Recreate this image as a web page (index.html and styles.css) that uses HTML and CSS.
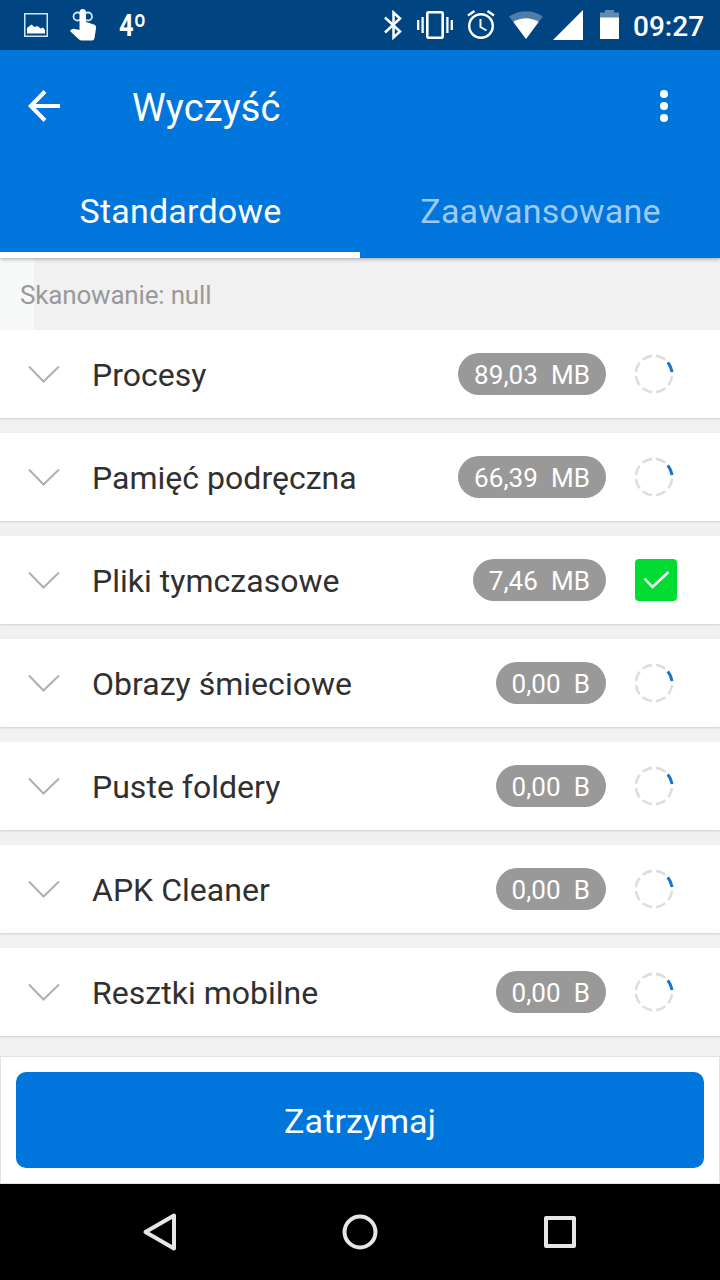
FILE: index.html
```
<!DOCTYPE html>
<html lang="pl">
<head>
<meta charset="utf-8">
<title>Wyczyść</title>
<link rel="stylesheet" href="styles.css">
</head>
<body>
<svg class="defs" width="0" height="0" aria-hidden="true">
  <symbol id="chevron" viewBox="0 0 32 18"><path d="M1 1.500L15.500 16.500L31 1.500" fill="none" stroke="#b0b0b0" stroke-width="2"/></symbol>
  <symbol id="spinner" viewBox="0 0 42 42">
    <circle cx="19" cy="21" r="18.200" fill="none" stroke="#dedede" stroke-width="2.600" pathLength="360" stroke-dasharray="32 13" stroke-dashoffset="-6.500"/>
    <path d="M32.800 9.400Q36 13.500 37.100 19" fill="none" stroke="#1476d0" stroke-width="3"/>
  </symbol>
</svg>
<div class="screen">
  <div class="status">
    <svg class="picture" width="24" height="24" viewBox="0 0 24 24"><rect x=".75" y=".75" width="22.500" height="22.500" fill="none" stroke="#c9e8f6" stroke-width="1.500"/><path d="M3 20.500V15L7.500 11.500L10.500 14L13.500 13L16.500 15.500L19 14.500L21 17V20.500Z" fill="#fff"/></svg>
    <svg class="hand" width="28" height="34" viewBox="0 0 28 34"><g fill="none" stroke="#c9e8f6" stroke-width="1.800"><circle cx="7.500" cy="8.500" r="4"/><circle cx="18" cy="8.500" r="4"/></g><path d="M12.700 1Q16 1 16 4.500V14L24 16.500Q26.500 17.500 26 20.500L24.500 30Q24 32.500 22 32.500H12Q10 32.500 8.500 31L0 23Q2 20 5 21L9.500 22V4.500Q9.500 1 12.700 1Z" fill="#fff"/></svg>
    <span class="temp">4<span class="degree">º</span></span>
    <svg class="bluetooth" width="18" height="30" viewBox="0 0 18 30"><path d="M1 7.500L16 21.500L9.500 27.500V2.500L16 8.500L1 22.500" fill="none" stroke="#fff" stroke-width="2.500"/></svg>
    <svg class="vibrate" width="36" height="28" viewBox="0 0 36 28"><rect x="10.300" y="1.300" width="15.400" height="25.400" rx="1.500" fill="none" stroke="#fff" stroke-width="2.600"/><path d="M1.200 9V19M5.600 6V22M30.400 6V22M34.800 9V19" stroke="#fff" stroke-width="2.300"/></svg>
    <svg class="alarm" width="28" height="29" viewBox="0 0 28 29"><g fill="none" stroke="#fff" stroke-width="2.400"><circle cx="14" cy="16" r="11.800"/><path d="M1 5.500L7.500 1M27 5.500L20.500 1"/><path d="M13.500 9V17L19.500 20.500" stroke-width="2"/></g></svg>
    <svg class="wifi" width="34" height="28" viewBox="0 0 34 28"><path d="M0 5.500Q17-5 34 5.500L29.700 11H4.300Z" fill="#4e7da8"/><path d="M4.300 11Q17 3.500 29.700 11L17 28Z" fill="#fff"/></svg>
    <svg class="signal" width="30" height="30" viewBox="0 0 30 30"><path d="M0 30L30 0V30Z" fill="#fff"/></svg>
    <svg class="battery" width="19" height="29" viewBox="0 0 19 29"><path d="M0 8V2.500H5V0H14V2.500H19V8Z" fill="#5f8bb0"/><path d="M0 7.500H19V29H0Z" fill="#fff"/></svg>
    <span class="clock">09:27</span>
  </div>
  <header class="appbar">
    <div class="titlebar">
      <svg width="32" height="32" viewBox="0 0 32 32"><path d="M17 1.500L2.800 16L17 30.500M2.800 16H32" fill="none" stroke="#fff" stroke-width="4"/></svg>
      <h1 class="title">Wyczyść</h1>
      <svg width="8" height="32" viewBox="0 0 8 32" fill="#fff"><circle cx="4" cy="4" r="4"/><circle cx="4" cy="16" r="4"/><circle cx="4" cy="28" r="4"/></svg>
    </div>
    <nav class="tabs">
      <div class="tab active"><span>Standardowe</span></div>
      <div class="tab"><span>Zaawansowane</span></div>
    </nav>
  </header>
  <div class="scan"><span>Skanowanie: null</span></div>
  <main class="list">
    <div class="row"><svg class="chevron"><use href="#chevron"/></svg><span class="name">Procesy</span><span class="size">89,03&nbsp; MB</span><svg class="state"><use href="#spinner"/></svg></div>
    <div class="row"><svg class="chevron"><use href="#chevron"/></svg><span class="name">Pamięć podręczna</span><span class="size">66,39&nbsp; MB</span><svg class="state"><use href="#spinner"/></svg></div>
    <div class="row"><svg class="chevron"><use href="#chevron"/></svg><span class="name">Pliki tymczasowe</span><span class="size">7,46&nbsp; MB</span><svg class="state" viewBox="0 0 42 42"><rect width="42" height="42" rx="4" fill="#00dc32"/><path d="M9.500 19.500L17.500 28L33.500 13" fill="none" stroke="#fff" stroke-width="2.500"/></svg></div>
    <div class="row"><svg class="chevron"><use href="#chevron"/></svg><span class="name">Obrazy śmieciowe</span><span class="size">0,00&nbsp; B</span><svg class="state"><use href="#spinner"/></svg></div>
    <div class="row"><svg class="chevron"><use href="#chevron"/></svg><span class="name">Puste foldery</span><span class="size">0,00&nbsp; B</span><svg class="state"><use href="#spinner"/></svg></div>
    <div class="row"><svg class="chevron"><use href="#chevron"/></svg><span class="name">APK Cleaner</span><span class="size">0,00&nbsp; B</span><svg class="state"><use href="#spinner"/></svg></div>
    <div class="row"><svg class="chevron"><use href="#chevron"/></svg><span class="name">Resztki mobilne</span><span class="size">0,00&nbsp; B</span><svg class="state"><use href="#spinner"/></svg></div>
  </main>
  <div class="footer"><button class="stop">Zatrzymaj</button></div>
  <div class="navbar">
    <svg width="40" height="40" viewBox="0 0 40 40"><path d="M34 3.500V36.500L5.500 20Z"/></svg>
    <svg width="40" height="40" viewBox="0 0 40 40"><circle cx="20" cy="20" r="15.500"/></svg>
    <svg width="40" height="40" viewBox="0 0 40 40"><rect x="6" y="6" width="28" height="28"/></svg>
  </div>
</div>
</body>
</html>
```
FILE: styles.css
```
* { box-sizing: border-box; }
body { margin: 0; font-family: Roboto, "Noto Sans", sans-serif; }
svg { display: block; flex: none; }
.defs { position: absolute; }
.screen { width: 720px; height: 1280px; display: flex; flex-direction: column; overflow: hidden; background: #f1f1f1; }

.status { height: 50px; flex: none; display: flex; align-items: flex-start; background: #004581; color: #fff; }
.picture { margin: 13px 0 0 24px; }
.hand { margin: 8px 0 0 22px; }
.temp { display: flex; margin: 9px 0 0 21px; font-size: 31px; line-height: 34px; font-weight: 700; transform: scaleX(.82); transform-origin: left; }
.degree { font-size: 34px; font-weight: 500; }
.bluetooth { margin: 10px 0 0 auto; }
.vibrate { margin: 11px 0 0 15px; }
.alarm { margin: 10px 0 0 14px; }
.wifi { margin: 11px 0 0 14px; }
.signal { margin: 10px 0 0 10px; }
.battery { margin: 10px 0 0 17px; }
.clock { width: 72px; margin: 10px 15px 0 14px; font-size: 28px; line-height: 34px; font-weight: 500; white-space: nowrap; }

.appbar { height: 208px; flex: none; background: #0075db; color: #fff; box-shadow: 0 1px 4px rgba(0,0,0,.34); z-index: 1; }
.titlebar { height: 112px; padding: 0 52px 0 28px; display: flex; align-items: center; }
.title { flex: 1; margin: 4px 0 0 72px; font-size: 38px; line-height: 46px; letter-spacing: .12px; font-weight: 400; }
.tabs { height: 96px; display: flex; }
.tab { flex: 1; display: flex; align-items: center; justify-content: center; padding: 8px 0 0 1px; font-size: 34px; letter-spacing: .2px; color: #9fc9f4; border-bottom: 6px solid transparent; }
.tab.active { color: #fff; border-color: #fff; }

.scan { height: 72px; flex: none; display: flex; align-items: center; padding: 2px 20px 0; font-size: 26px; letter-spacing: -.18px; color: #999; background: linear-gradient(to right, #f8faf9 34px, #f1f1f1 34px); }
.list { display: flex; flex-direction: column; gap: 15px; }
.row { height: 88px; display: flex; align-items: center; padding: 0 43px 0 28px; background: #fff; box-shadow: 0 1px 2px rgba(0,0,0,.14); }
.chevron { width: 32px; height: 18px; }
.name { flex: 1; margin: 2px 0 0 32px; font-size: 32px; letter-spacing: .02px; color: #303030; }
.size { height: 42px; padding: 2px 16px 0; border-radius: 21px; background: #999; color: #fff; font-size: 26px; letter-spacing: .06px; line-height: 40px; white-space: nowrap; }
.state { width: 42px; height: 42px; margin-left: 29px; }

.footer { height: 128px; flex: none; margin-top: 20px; padding: 15px; background: #fff; border: 1px solid #e2e2e2; }
.stop { display: block; width: 100%; height: 96px; padding: 2px 0 0; border: 0; border-radius: 10px; background: #0075db; color: #fff; font: 34px Roboto, sans-serif; letter-spacing: .1px; }
.navbar { height: 96px; flex: none; display: flex; align-items: center; justify-content: center; gap: 160px; background: #000; }
.navbar svg { fill: none; stroke: #e6e6e6; stroke-width: 4; stroke-linejoin: round; }
```
